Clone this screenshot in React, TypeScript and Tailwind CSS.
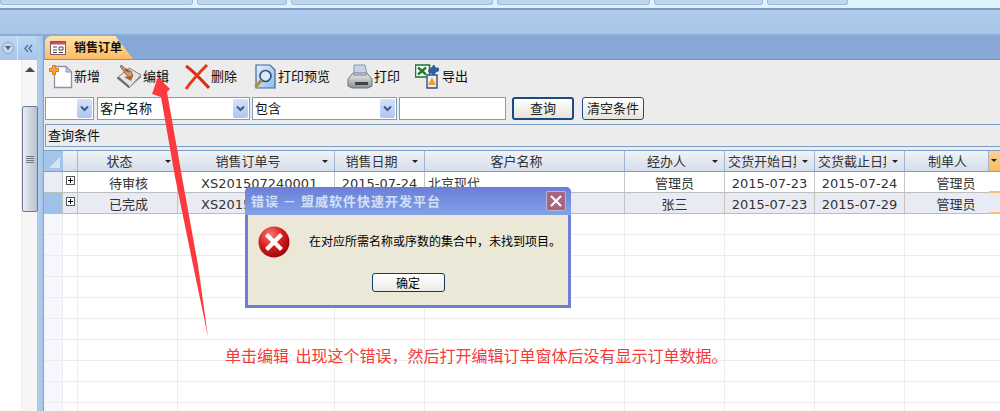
const FONT = "font-['Tahoma','DejaVu_Sans','Noto_Sans_CJK_SC',sans-serif]";

const cols = [19, 15, 100, 157, 90, 200, 100, 90, 90, 84, 11];

function Caret() {
  return <span className="absolute right-[6px] top-[9px] h-0 w-0 border-x-[3px] border-t-[3px] border-x-transparent border-t-[#222]" />;
}

function SelectArrow() {
  return (
    <span className="flex h-[19px] w-[15px] items-center justify-center rounded-[2px] bg-gradient-to-b from-[#d5e2fa] to-[#aec5f2]">
      <svg width="9" height="7" viewBox="0 0 9 7"><path d="M1 1.5 4.5 5 8 1.5" fill="none" stroke="#44598a" strokeWidth="2" /></svg>
    </span>
  );
}

function Select({ w, label }: { w: string; label?: string }) {
  return (
    <div className={`flex h-[23px] items-center justify-between border border-[#7f9db9] bg-white pl-[2px] pr-[1px] text-[13px] text-[#111] ${w}`}>
      <span>{label}</span>
      <SelectArrow />
    </div>
  );
}

function NewIcon() {
  return (
    <svg width="24" height="24" viewBox="0 0 24 24">
      <path d="M5.5 1.5H17L22.5 7V22.5H5.5Z" fill="#fdfdff" stroke="#8d8fae" strokeWidth="1.3" />
      <path d="M17 1.5V7H22.5Z" fill="#c5cbe0" stroke="#8d8fae" />
      <path d="M3.5 0.5h3v3h3v3h-3v3h-3v-3h-3v-3h3Z" fill="#f4a93a" stroke="#d97b13" />
    </svg>
  );
}

function EditIcon() {
  return (
    <svg width="26" height="26" viewBox="0 0 26 26">
      <path d="M1 14 13 4 25 11 13 24Z" fill="#e6e5e2" stroke="#7d7d7d" />
      <path d="M1 14 13 24V21.5L3 13Z" fill="#6d6a64" />
      <path d="M13 24 25 11V13.5L13 24Z" fill="#8e8a83" />
      <path d="M5 1 10 5 15 7 17 12 12 13 9 9 4.5 3Z" fill="#c9a178" stroke="#6a3d1f" strokeWidth=".7" />
      <path d="M8 13 17 12 15 17Z" fill="#a5663c" />
      <path d="M9 5.5 13 8" stroke="#d93a22" strokeWidth="1.8" />
    </svg>
  );
}

function DeleteIcon() {
  return (
    <svg width="26" height="26" viewBox="0 0 26 26">
      <path d="M2 2C8 6 13 11 25 24" stroke="#dc2a10" strokeWidth="3" fill="none" />
      <path d="M23 1C16 8 9 15 2 25" stroke="#e63c1a" strokeWidth="3" fill="none" />
    </svg>
  );
}

function PreviewIcon() {
  return (
    <svg width="24" height="26" viewBox="0 0 24 26">
      <defs>
        <linearGradient id="pv" x1="0" y1="0" x2="1" y2="1"><stop offset="0" stopColor="#e5f0fb" /><stop offset="1" stopColor="#8fbde8" /></linearGradient>
      </defs>
      <path d="M3 1H17L22 6V24H3Z" fill="url(#pv)" stroke="#3f66a6" strokeWidth="1.2" />
      <circle cx="12.5" cy="12" r="5.5" fill="#dbe9f6" stroke="#33507f" strokeWidth="1.6" />
      <path d="M8.5 16 2.5 23" stroke="#b88a2c" strokeWidth="3" />
    </svg>
  );
}

function PrintIcon() {
  return (
    <svg width="26" height="26" viewBox="0 0 26 26">
      <defs>
        <linearGradient id="pr" x1="0" y1="0" x2="0" y2="1"><stop offset="0" stopColor="#eef0f1" /><stop offset="1" stopColor="#8a9094" /></linearGradient>
      </defs>
      <path d="M7 1H18L20 10H7Z" fill="#c3d4ea" stroke="#8898ad" />
      <path d="M1 15 6 9H20L25 15V22L21 24H5L1 22Z" fill="url(#pr)" stroke="#6e7478" />
      <path d="M8 18H21V21H8Z" fill="#3f4346" />
      <path d="M6 11H20" stroke="#777" />
    </svg>
  );
}

function ExportIcon() {
  return (
    <svg width="26" height="26" viewBox="0 0 26 26">
      <rect x="0.5" y="1" width="14" height="12" fill="#fff" stroke="#227a33" strokeWidth="1.6" />
      <path d="M3 3.5 11 10.5M11 3.5 3 10.5" stroke="#227a33" strokeWidth="2.4" />
      <path d="M13 7 19 1l1.5 3h3v3l-3 1L19 11Z" fill="#2c5fa8" stroke="#17366c" strokeWidth=".6" />
      <path d="M12 11H22V24H12Z" fill="#e7edf7" stroke="#36517f" strokeWidth="1.4" />
      <path d="M17 13.5 21 21H13Z" fill="#f19d2a" />
    </svg>
  );
}

function Tool({ icon, label, mr }: { icon: React.ReactNode; label: string; mr: string }) {
  return (
    <div className={`flex items-center gap-[1px] ${mr}`}>
      {icon}
      <span className="text-[13px] text-[#0b0b0b]">{label}</span>
    </div>
  );
}

function HeaderCell({ w, label, caret = true, clip, pad = true }: { w: number; label: string; caret?: boolean; clip?: boolean; pad?: boolean }) {
  return (
    <div style={{ width: w }} className={`relative flex h-full shrink-0 items-center overflow-hidden border-r border-[#9db6d4] pt-[1px] text-[13px] text-[#333] ${clip ? "pl-[3px]" : pad ? "" : "pl-[2px]"}`}>
      <span className={clip ? "w-[68px] overflow-hidden whitespace-nowrap" : `w-full text-center ${pad ? "pr-[16px]" : ""}`}>{label}</span>
      {caret && <Caret />}
    </div>
  );
}

function Cell({ w, children, align = "center", px = "", border = true }: { w: number; children?: React.ReactNode; align?: string; px?: string; border?: boolean }) {
  return (
    <div style={{ width: w, textAlign: align as "center" | "left" }} className={`h-full shrink-0 overflow-hidden whitespace-nowrap pt-[3px] text-[13px] leading-[17px] text-[#333] ${border ? "border-r border-[#c4c4c4]" : ""} ${px}`}>
      {children}
    </div>
  );
}

function Row({ sel, cells }: { sel?: boolean; cells: string[] }) {
  return (
    <div className={`flex h-[21px] border-b border-[#bdbdbd] ${sel ? "bg-[#e8ebf4]" : "bg-white"}`}>
      <div style={{ width: cols[0] }} className={`shrink-0 border-r border-[#c4c4c4] ${sel ? "bg-[#9dc1e8]" : "bg-[#e8edf6]"}`} />
      <div style={{ width: cols[1] }} className="flex shrink-0 justify-center border-r border-[#c4c4c4] pt-[4px]">
        <span className="relative h-[9px] w-[9px] border border-[#555] bg-white">
          <span className="absolute left-[1px] top-[3px] h-[1px] w-[5px] bg-black" />
          <span className="absolute left-[3px] top-[1px] h-[5px] w-[1px] bg-black" />
        </span>
      </div>
      <Cell w={cols[2]} px="pl-[2px]">{cells[0]}</Cell>
      <Cell w={cols[3]} align="left" px="pl-[23px]">{cells[1]}</Cell>
      <Cell w={cols[4]}>{cells[2]}</Cell>
      <Cell w={cols[5]} align="left" px="pl-[3px]">{cells[3]}</Cell>
      <Cell w={cols[6]}>{cells[4]}</Cell>
      <Cell w={cols[7]}>{cells[5]}</Cell>
      <Cell w={cols[8]}>{cells[6]}</Cell>
      <Cell w={cols[9]} px="pl-[18px]" border={false}>{cells[7]}</Cell>
      <div style={{ width: cols[10] }} className="relative shrink-0">
        <span className="absolute bottom-[-1px] left-0 h-[2px] w-full bg-[#fdbf75]" />
      </div>
    </div>
  );
}

function EmptyRow() {
  return (
    <div className="flex h-[21px] border-b border-[#ececec]">
      {cols.map((w, i) => (
        <div key={i} style={{ width: w }} className={`h-full shrink-0 ${i === 0 ? "bg-[#f6f7fe]" : ""} ${i < 9 ? "border-r border-[#ececec]" : ""}`} />
      ))}
    </div>
  );
}

function ErrorIcon() {
  return (
    <svg width="32" height="32" viewBox="0 0 32 32">
      <defs>
        <radialGradient id="er" cx=".38" cy=".28" r=".8"><stop offset="0" stopColor="#f47d7d" /><stop offset=".5" stopColor="#dc1c1c" /><stop offset="1" stopColor="#8a0505" /></radialGradient>
      </defs>
      <circle cx="16" cy="16" r="15.5" fill="url(#er)" />
      <path d="M10 10 22 22M22 10 10 22" stroke="#fff" strokeWidth="4.2" strokeLinecap="square" />
    </svg>
  );
}

function Dialog() {
  return (
    <div className="absolute left-[245px] top-[187px] w-[326px] rounded-t-[5px] border-x-[3px] border-b-[3px] border-[#6f7fd6] bg-[#ebe8d8]">
      <div className="-mx-[3px] flex h-[28px] items-center justify-between rounded-t-[5px] bg-gradient-to-b from-[#6b7ed6] to-[#82a3e8] pl-[6px] pr-[5px]">
        <span className="font-['Noto_Sans_CJK_SC',sans-serif] text-[13px] font-bold tracking-[1px] text-[#d2e0f6]">错误 － 盟威软件快速开发平台</span>
        <span className="flex h-[20px] w-[20px] items-center justify-center rounded-[2px] border border-[#b4b6d6] bg-[#a86480]">
          <svg width="12" height="12" viewBox="0 0 12 12"><path d="M1 1 11 11M11 1 1 11" stroke="#fff" strokeWidth="2.2" /></svg>
        </span>
      </div>
      <div className="flex h-[58px] items-start pl-[10px] pt-[11px]">
        <ErrorIcon />
        <span className="ml-[19px] mt-[6px] whitespace-nowrap font-['Noto_Sans_CJK_SC',sans-serif] text-[12px] text-black">在对应所需名称或序数的集合中，未找到项目。</span>
      </div>
      <div className="flex justify-center pb-[13px]">
        <button className="flex h-[19px] w-[73px] items-center justify-center rounded-[3px] border border-[#0f3a6c] bg-gradient-to-b from-white to-[#ecebe4] font-['Noto_Sans_CJK_SC',sans-serif] text-[12px] text-black">确定</button>
      </div>
    </div>
  );
}

function Arrow() {
  return (
    <svg className="pointer-events-none absolute left-0 top-0" width="1000" height="411">
      <path d="M158 77 170 89 167 92 182 177 198 265 208 337 193 265 175 177 161 97 152 94Z" fill="#fb3a3f" />
    </svg>
  );
}

const tabs = [193, 90, 202, 153, 109, 81];

export default function App() {
  return (
    <div className={`relative h-[411px] w-[1000px] overflow-hidden bg-white ${FONT}`}>
      {/* Top tab strip */}
      <div className="flex h-[8px] items-start bg-[#dff3fc]">
        {tabs.map((w, i) => (
          <div key={i} style={{ width: w }} className="mr-[4px] h-[5px] rounded-b-[3px] border-x border-b border-[#9dbbd9] bg-[#bdd7ef]" />
        ))}
      </div>
      {/* Ribbon band */}
      <div className="h-[28px] border-y-2 border-t-[#7f97c8] border-b-[#8cacd8] bg-gradient-to-b from-[#aecbeb] to-[#a9c5e8]" />

      <div className="flex h-[375px]">
        {/* Left nav */}
        <div className="flex w-[38px] shrink-0 flex-col border-r border-[#a8c5e6]">
          <div className="flex h-[24px] items-center bg-gradient-to-b from-[#bcd7f2] to-[#a6c6ea]">
            <span className="ml-[2px] flex h-[12px] w-[12px] items-center justify-center rounded-full border border-[#8ea3c2] bg-[#c8d6e8]">
              <span className="h-0 w-0 border-x-[3px] border-t-[4px] border-x-transparent border-t-[#4e6079]" />
            </span>
            <span className="ml-[3px] h-full w-[1px] bg-[#dbe8f6]" />
            <svg className="ml-[6px]" width="9" height="9" viewBox="0 0 9 9"><path d="M4 1 1 4.5 4 8M8 1 5 4.5 8 8" fill="none" stroke="#4f6fa8" strokeWidth="1.3" /></svg>
          </div>
          <div className="flex flex-1 justify-end bg-white">
            <div className="flex w-[16px] flex-col items-center border-l border-[#ececec] bg-[#f6f6f6]">
              <span className="mt-[7px] h-0 w-0 border-x-[5px] border-b-[5px] border-x-transparent border-b-[#3f4b5c]" />
              <div className="mt-[34px] flex h-[106px] w-[16px] flex-col items-center justify-center rounded-[2px] border border-[#6d7b90] bg-gradient-to-r from-[#eaeef3] via-[#cfd6e0] to-[#b7c1cf]">
                <span className="h-[1px] w-[8px] bg-[#6e7785]" />
                <span className="mt-[1px] h-[1px] w-[8px] bg-[#6e7785]" />
                <span className="mt-[1px] h-[1px] w-[8px] bg-[#6e7785]" />
                <span className="mt-[1px] h-[1px] w-[8px] bg-[#6e7785]" />
              </div>
            </div>
          </div>
        </div>
        <div className="w-[6px] shrink-0 border-r border-[#7aa3d6] bg-gradient-to-r from-[#b4d0ee] to-[#a6c3e6]" />

        {/* Main */}
        <div className="flex min-w-0 flex-1 flex-col">
          {/* Doc tab strip */}
          <div className="flex h-[24px] shrink-0 items-end border-b border-[#6e95c7] bg-[#87a8d6] pl-[1px]">
            <div className="flex h-[23px] w-[88px] items-center gap-[8px] rounded-t-[6px] bg-gradient-to-b from-[#ffe3a8] to-[#fdbb60] pl-[5px] [clip-path:polygon(0_0,80%_0,100%_100%,0_100%)]">
              <svg width="16" height="14" viewBox="0 0 16 14">
                <rect x=".5" y=".5" width="15" height="13" fill="#fff" stroke="#7a5b70" />
                <rect x="1" y="1" width="14" height="2.5" fill="#c84f6b" />
                <path d="M3 6H7M3 9H7M3 11.5H7M9 6H13V9H9ZM9 11.5H13" stroke="#444" fill="none" />
              </svg>
              <span className="text-[12px] font-bold text-[#111]">销售订单</span>
            </div>
          </div>

          <div className="flex flex-1 flex-col bg-[#ececec]">
            {/* Toolbar */}
            <div className="flex h-[34px] shrink-0 items-center pl-[5px]">
              <Tool icon={<NewIcon />} label="新增" mr="mr-[16px]" />
              <Tool icon={<EditIcon />} label="编辑" mr="mr-[15px]" />
              <Tool icon={<DeleteIcon />} label="删除" mr="mr-[16px]" />
              <Tool icon={<PreviewIcon />} label="打印预览" mr="mr-[17px]" />
              <Tool icon={<PrintIcon />} label="打印" mr="mr-[15px]" />
              <Tool icon={<ExportIcon />} label="导出" mr="" />
            </div>
            {/* Filter row */}
            <div className="mt-[3px] flex h-[23px] shrink-0 items-center pl-[1px]">
              <Select w="w-[49px]" />
              <Select w="w-[153px] ml-[3px]" label="客户名称" />
              <Select w="w-[145px] ml-[2px]" label="包含" />
              <div className="ml-[2px] h-[23px] w-[107px] border border-[#7f9db9] bg-white" />
              <button className="ml-[6px] flex h-[23px] w-[62px] items-center justify-center rounded-[3px] border-2 border-[#1d4a86] bg-gradient-to-b from-white to-[#e6e4d9] text-[13px] text-[#222]">查询</button>
              <button className="ml-[8px] flex h-[23px] w-[62px] items-center justify-center rounded-[3px] border border-[#1d4a86] bg-gradient-to-b from-white to-[#e6e4d9] text-[13px] text-[#222]">清空条件</button>
            </div>
            {/* Query conditions */}
            <div className="ml-[1px] mt-[4px] flex h-[23px] shrink-0 items-center border-y border-l border-[#7e9fc4] pl-[2px] text-[13px] text-[#111]">查询条件</div>
            <div className="h-[3px] shrink-0" />

            {/* Grid */}
            <div className="flex-1 overflow-hidden bg-white">
              <div className="flex h-[22px] border-y border-[#7e9fc4] bg-gradient-to-b from-[#f0f3f8] to-[#d5deea]">
                <div style={{ width: cols[0] }} className="flex shrink-0 items-end justify-end bg-[#a6c4ea] p-[3px]">
                  <span className="h-0 w-0 border-b-[11px] border-l-[11px] border-b-[#d6e4f5] border-l-transparent" />
                </div>
                <div style={{ width: cols[1] }} className="shrink-0 border-r border-[#9db6d4]" />
                <HeaderCell w={cols[2]} label="状态" />
                <HeaderCell w={cols[3]} label="销售订单号" />
                <HeaderCell w={cols[4]} label="销售日期" />
                <HeaderCell w={cols[5]} label="客户名称" caret={false} />
                <HeaderCell w={cols[6]} label="经办人" />
                <HeaderCell w={cols[7]} label="交货开始日期" clip />
                <HeaderCell w={cols[8]} label="交货截止日期" clip />
                <HeaderCell w={cols[9]} label="制单人" caret={false} pad={false} />
                <div style={{ width: cols[10] }} className="relative shrink-0 bg-gradient-to-b from-[#fbd394] to-[#f8bd5c]">
                  <span className="absolute left-[2px] top-[8px] h-0 w-0 border-x-[3px] border-t-[3px] border-x-transparent border-t-[#222]" />
                </div>
              </div>
              <Row cells={["待审核", "XS201507240001", "2015-07-24", "北京现代", "管理员", "2015-07-23", "2015-07-24", "管理员"]} />
              <Row sel cells={["已完成", "XS201507290001", "", "", "张三", "2015-07-23", "2015-07-29", "管理员"]} />
              {Array.from({ length: 10 }).map((_, i) => <EmptyRow key={i} />)}
            </div>
          </div>
        </div>
      </div>

      <Dialog />
      <Arrow />
      <div className="absolute left-[225px] top-[345px] whitespace-nowrap font-['Noto_Sans_CJK_SC',sans-serif] text-[16px] leading-[20px] text-[#f53a3a] [word-spacing:3px]">单击编辑 出现这个错误，然后打开编辑订单窗体后没有显示订单数据。</div>
    </div>
  );
}
